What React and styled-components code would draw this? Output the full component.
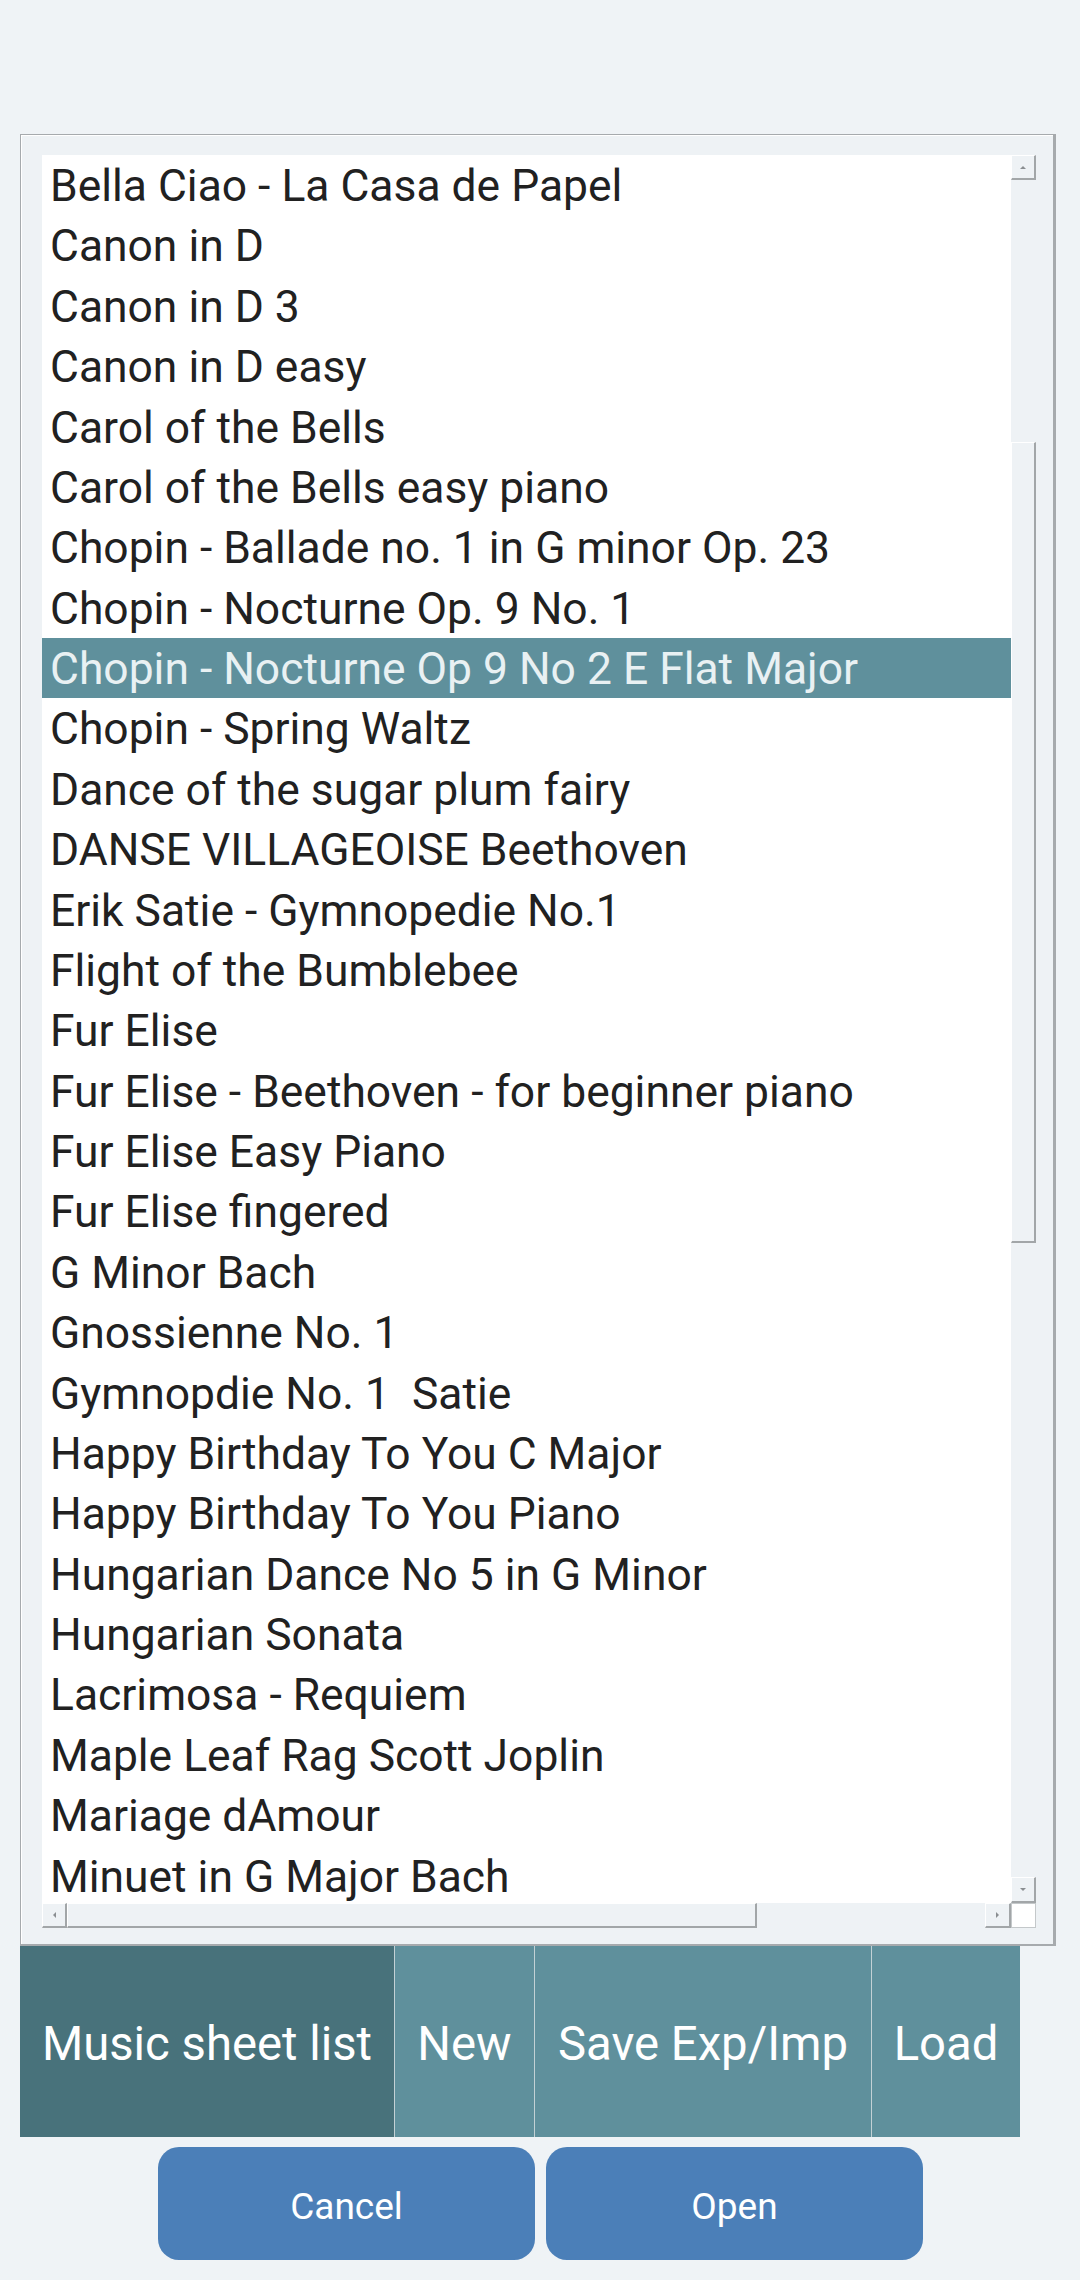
import React from 'react';
import styled, { createGlobalStyle } from 'styled-components';

const GlobalStyle = createGlobalStyle`
  html, body {
    margin: 0;
    padding: 0;
    background: #eff3f6;
    font-family: Roboto, "Noto Sans", sans-serif;
  }
`;

const Page = styled.div`
  width: 1080px;
  height: 2280px;
  box-sizing: border-box;
  padding: 134px 0 0 20px;
  display: flex;
  flex-direction: column;
`;

const Panel = styled.section`
  width: 1036px;
  height: 1812px;
  box-sizing: border-box;
  background: #eef2f5;
  border: 1px solid #a6aaad;
  border-right: 3px solid #a6aaad;
  border-bottom: 2px solid #a6aaad;
  box-shadow: inset 1px 1px 0 #ffffff;
  padding: 20px 17px 16px 21px;
  display: grid;
  grid-template-columns: 969px 25px;
  grid-template-rows: 1748px 25px;
`;

const List = styled.ul`
  margin: 0;
  padding: 0;
  list-style: none;
  background: #ffffff;
  overflow: hidden;
`;

const Item = styled.li`
  height: 60.375px;
  box-sizing: border-box;
  padding: 1px 0 0 8px;
  line-height: 60.375px;
  font-size: 44.4px;
  white-space: pre;
  overflow: hidden;
  color: ${p => (p.selected ? '#e9f1f3' : '#212121')};
  background: ${p => (p.selected ? '#5f909c' : 'transparent')};
`;

const VScroll = styled.div`
  display: flex;
  flex-direction: column;
`;

const HScroll = styled.div`
  display: flex;
  flex-direction: row;
`;

const ScrollButton = styled.div`
  flex: 0 0 auto;
  width: ${p => p.w || 25}px;
  height: ${p => p.h || 25}px;
  box-sizing: border-box;
  background: #eef2f5;
  border-top: 1px solid #ffffff;
  border-left: 1px solid #ffffff;
  border-right: 2px solid #a2a6a8;
  border-bottom: 2px solid #a2a6a8;
  display: flex;
  align-items: center;
  justify-content: center;
`;

const Arrow = styled.span`
  width: 0;
  height: 0;
  border: 3px solid transparent;
  ${p => p.dir === 'up' && 'border-bottom: 3px solid #8a8e91; margin-bottom: 3px;'}
  ${p => p.dir === 'down' && 'border-top: 3px solid #8a8e91; margin-top: 3px;'}
  ${p => p.dir === 'left' && 'border-right: 3px solid #8a8e91; margin-right: 3px;'}
  ${p => p.dir === 'right' && 'border-left: 3px solid #8a8e91; margin-left: 3px;'}
`;

const VTrack = styled.div`
  flex: 1;
  padding-top: 262px;
  box-sizing: border-box;
`;

const HTrack = styled.div`
  flex: 1;
`;

const Corner = styled.div`
  width: 25px;
  height: 25px;
  box-sizing: border-box;
  background: #ffffff;
  border: 1px solid #c4c8ca;
`;

const Tabs = styled.nav`
  display: flex;
  height: 191px;
`;

const Tab = styled.div`
  width: ${p => p.w}px;
  box-sizing: border-box;
  padding-top: 4px;
  display: flex;
  align-items: center;
  justify-content: center;
  font-size: 47.25px;
  white-space: nowrap;
  color: #ffffff;
  background: ${p => (p.active ? '#48727b' : '#5f909c')};
  & + & {
    border-left: 1px solid #c3d1d5;
  }
`;

const Actions = styled.div`
  display: flex;
  gap: 11px;
  padding: 10px 0 0 138px;
`;

const ActionButton = styled.button`
  width: 377px;
  height: 113px;
  padding: 5px 0 0;
  border: none;
  border-radius: 21px;
  background: #4b7fb8;
  color: #ffffff;
  font-family: Roboto, sans-serif;
  font-size: 37px;
`;

const songs = [
  'Bella Ciao - La Casa de Papel',
  'Canon in D',
  'Canon in D 3',
  'Canon in D easy',
  'Carol of the Bells',
  'Carol of the Bells easy piano',
  'Chopin - Ballade no. 1 in G minor Op. 23',
  'Chopin - Nocturne Op. 9 No. 1',
  'Chopin - Nocturne Op 9 No 2 E Flat Major',
  'Chopin - Spring Waltz',
  'Dance of the sugar plum fairy',
  'DANSE VILLAGEOISE Beethoven',
  'Erik Satie - Gymnopedie No.1',
  'Flight of the Bumblebee',
  'Fur Elise',
  'Fur Elise - Beethoven - for beginner piano',
  'Fur Elise Easy Piano',
  'Fur Elise fingered',
  'G Minor Bach',
  'Gnossienne No. 1',
  'Gymnopdie No. 1  Satie',
  'Happy Birthday To You C Major',
  'Happy Birthday To You Piano',
  'Hungarian Dance No 5 in G Minor',
  'Hungarian Sonata',
  'Lacrimosa - Requiem',
  'Maple Leaf Rag Scott Joplin',
  'Mariage dAmour',
  'Minuet in G Major Bach',
];

const SELECTED = 8;

export default function App() {
  return (
    <>
      <GlobalStyle />
      <Page>
        <Panel>
          <List>
            {songs.map((s, i) => (
              <Item key={s} selected={i === SELECTED}>{s}</Item>
            ))}
          </List>
          <VScroll>
            <ScrollButton><Arrow dir="up" /></ScrollButton>
            <VTrack>
              <ScrollButton h={801} />
            </VTrack>
            <ScrollButton h={26}><Arrow dir="down" /></ScrollButton>
          </VScroll>
          <HScroll>
            <ScrollButton><Arrow dir="left" /></ScrollButton>
            <ScrollButton w={690} />
            <HTrack />
            <ScrollButton w={26}><Arrow dir="right" /></ScrollButton>
          </HScroll>
          <Corner />
        </Panel>
        <Tabs>
          <Tab active w={374}>Music sheet list</Tab>
          <Tab w={140}>New</Tab>
          <Tab w={337}>Save Exp/Imp</Tab>
          <Tab w={149}>Load</Tab>
        </Tabs>
        <Actions>
          <ActionButton>Cancel</ActionButton>
          <ActionButton>Open</ActionButton>
        </Actions>
      </Page>
    </>
  );
}
